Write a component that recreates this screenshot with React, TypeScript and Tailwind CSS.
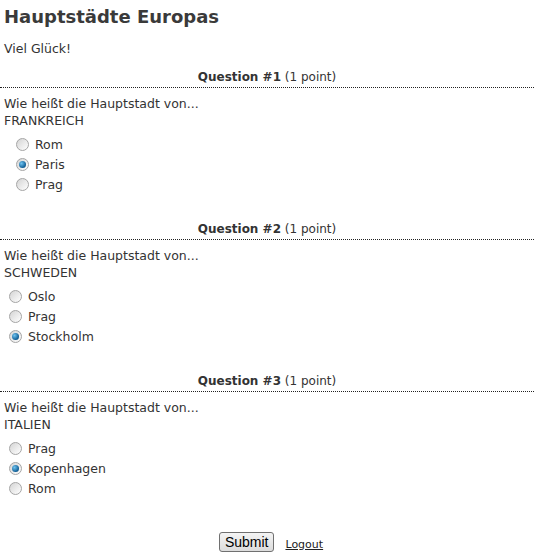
import React from "react";

function Radio({ checked }: { checked?: boolean }) {
  return (
    <span className="relative inline-flex h-[13px] w-[13px] shrink-0 items-center justify-center rounded-full border border-[#a5a5a5] bg-[linear-gradient(135deg,#d4d4d4,#ffffff)]">
      {checked && (
        <span className="h-[7px] w-[7px] rounded-full bg-[radial-gradient(circle_at_35%_35%,#6fc3f0,#0f5d94_70%,#0b3f66)]" />
      )}
    </span>
  );
}

type Q = { n: number; country: string; options: string[]; checked: number; indent: string };

const questions: Q[] = [
  { n: 1, country: "FRANKREICH", options: ["Rom", "Paris", "Prag"], checked: 1, indent: "pl-[16px]" },
  { n: 2, country: "SCHWEDEN", options: ["Oslo", "Prag", "Stockholm"], checked: 2, indent: "pl-[9px]" },
  { n: 3, country: "ITALIEN", options: ["Prag", "Kopenhagen", "Rom"], checked: 1, indent: "pl-[9px]" },
];

export default function App() {
  return (
    <div className="min-h-[559px] w-[537px] bg-white text-[#333] font-['Verdana','DejaVu_Sans',sans-serif] text-[12.5px] leading-[17px]">
      <div className="px-[4px] pt-[6px]">
        <h1 className="text-[18px] font-bold leading-[22px] text-[#3a3a3a]">Hauptstädte Europas</h1>
        <p className="mt-[12px]">Viel Glück!</p>
      </div>
      <div className="mt-[12px] flex flex-col gap-[27px]">
        {questions.map((q) => (
          <div key={q.n}>
            <div className="mr-[3px] border-b border-dotted border-[#222] pb-[1px] text-center text-[12px]">
              <span className="font-bold">Question #{q.n}</span> (1 point)
            </div>
            <div className="px-[4px] pt-[7px]">
              <div>Wie heißt die Hauptstadt von...</div>
              <div>{q.country}</div>
            </div>
            <div className={`mt-[5px] flex flex-col ${q.indent}`}>
              {q.options.map((o, i) => (
                <label key={o} className="flex h-[20px] items-center gap-[6px]">
                  <Radio checked={i === q.checked} />
                  <span>{o}</span>
                </label>
              ))}
            </div>
          </div>
        ))}
      </div>
      <div className="mt-[34px] flex items-end justify-center gap-[11px] pl-[5px]">
        <button className="h-[20px] rounded-[3px] border border-[#707070] bg-[linear-gradient(#f4f4f4,#dcdcdc)] px-[5px] font-['Liberation_Sans',sans-serif] text-[14px] leading-[18px] text-black">
          Submit
        </button>
        <a className="mb-[1px] text-[11px] leading-[13px] text-[#222] underline" href="#">Logout</a>
      </div>
    </div>
  );
}
